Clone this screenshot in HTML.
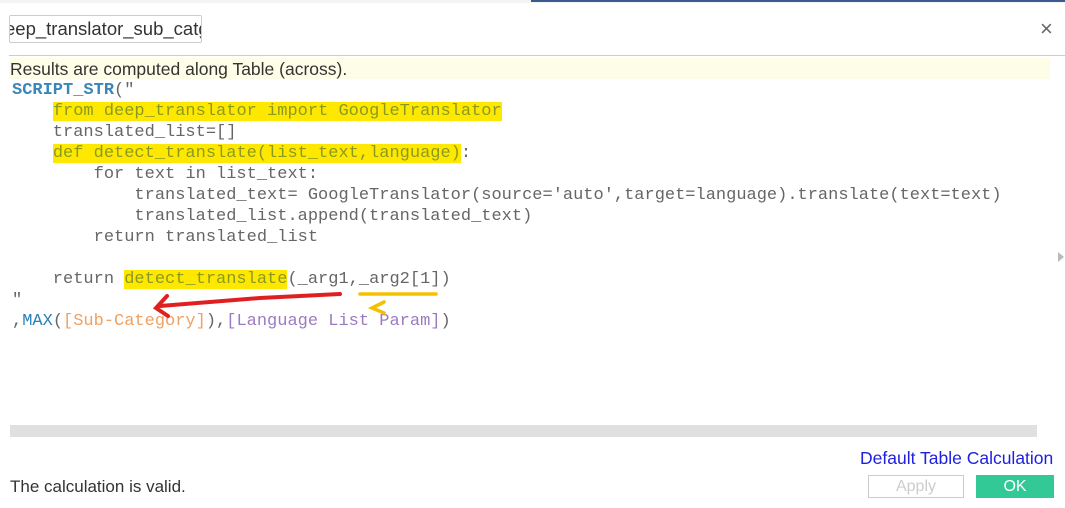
<!DOCTYPE html>
<html><head><style>
body{margin:0;width:1065px;height:508px;background:#fff;position:relative;overflow:hidden;font-family:"Liberation Sans",sans-serif}
.a{position:absolute}
.code{position:absolute;left:12px;top:80px;font-family:"Liberation Mono",monospace;font-size:17px;line-height:21px;color:#666;white-space:pre}
.hl{background:#ffe800;color:#8a9a20}
.kw{color:#3a86b8;font-weight:bold}
</style></head><body>
<div class="a" style="left:0;top:0;width:1065px;height:3px;background:#f4f4f4"></div>
<div class="a" style="left:531px;top:0;width:534px;height:2px;background:#3a5a90"></div>
<div class="a" style="left:9px;top:15px;width:191px;height:26px;border:1px solid #ccc;border-radius:2px;font-size:18.5px;line-height:26px;color:#333;overflow:hidden;white-space:nowrap;text-indent:-5px">eep_translator_sub_catg</div>
<div class="a" style="left:1040px;top:16px;font-size:22px;color:#666">×</div>
<div class="a" style="left:9px;top:55px;width:1056px;height:1px;background:#ccc"></div>
<div class="a" style="left:9px;top:58px;width:1041px;height:21px;background:#fefee8"></div>
<div class="a" style="left:10px;top:59px;font-size:17.5px;color:#333">Results are computed along Table (across).</div>
<div class="code"><span class="kw">SCRIPT_STR</span>("
    <span class="hl">from deep_translator import GoogleTranslator</span>
    translated_list=[]
    <span class="hl">def detect_translate(list_text,language)</span>:
        for text in list_text:
            translated_text= GoogleTranslator(source='auto',target=language).translate(text=text)
            translated_list.append(translated_text)
        return translated_list

    return <span class="hl">detect_translate</span>(_arg1,_arg2[1])
"
,<span style="color:#2a80b9">MAX</span>(<span style="color:#f0a060">[Sub-Category]</span>),<span style="color:#9b7bc0">[Language List Param]</span>)</div>
<svg class="a" style="left:0;top:0" width="1065" height="508">
<path d="M340 294 L260 298 L160 306" stroke="#e02020" stroke-width="4" fill="none" stroke-linecap="round"/>
<path d="M167 296 L156 308 L168 316" stroke="#e02020" stroke-width="4" fill="none" stroke-linecap="round"/>
<path d="M360 294 L436 294" stroke="#f5c000" stroke-width="3.5" fill="none" stroke-linecap="round"/>
<path d="M384 302 L372 308 L384 313" stroke="#f5c000" stroke-width="3.5" fill="none" stroke-linecap="round"/>
<path d="M1058 252 L1064 257 L1058 262Z" fill="#bbb"/>
</svg>
<div class="a" style="left:10px;top:425px;width:1027px;height:12px;background:#e0e0e0"></div>
<div class="a" style="left:860px;top:448px;font-size:17.5px;color:#2020e0">Default Table Calculation</div>
<div class="a" style="left:10px;top:477px;font-size:17px;color:#333">The calculation is valid.</div>
<div class="a" style="left:868px;top:475px;width:94px;height:21px;border:1px solid #ccc;color:#ccc;font-size:16px;text-align:center;line-height:21px">Apply</div>
<div class="a" style="left:976px;top:475px;width:78px;height:23px;background:#33c996;color:#fff;font-size:16px;text-align:center;line-height:23px">OK</div>
</body></html>
